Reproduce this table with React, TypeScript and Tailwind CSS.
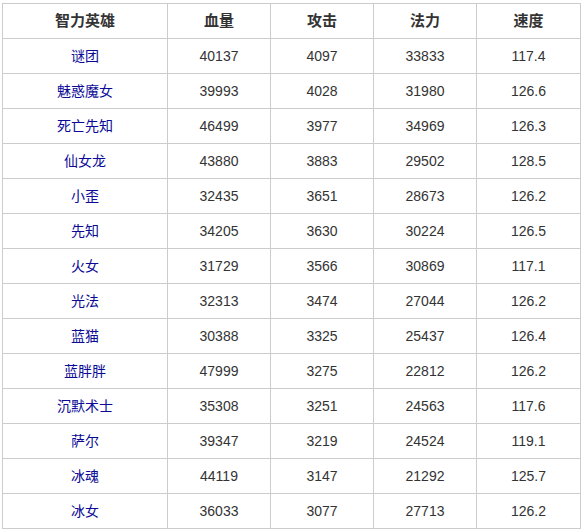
const rows: [string, number, number, number, string][] = [
  ["谜团", 40137, 4097, 33833, "117.4"],
  ["魅惑魔女", 39993, 4028, 31980, "126.6"],
  ["死亡先知", 46499, 3977, 34969, "126.3"],
  ["仙女龙", 43880, 3883, 29502, "128.5"],
  ["小歪", 32435, 3651, 28673, "126.2"],
  ["先知", 34205, 3630, 30224, "126.5"],
  ["火女", 31729, 3566, 30869, "117.1"],
  ["光法", 32313, 3474, 27044, "126.2"],
  ["蓝猫", 30388, 3325, 25437, "126.4"],
  ["蓝胖胖", 47999, 3275, 22812, "126.2"],
  ["沉默术士", 35308, 3251, 24563, "117.6"],
  ["萨尔", 39347, 3219, 24524, "119.1"],
  ["冰魂", 44119, 3147, 21292, "125.7"],
  ["冰女", 36033, 3077, 27713, "126.2"],
];

const headers = ["智力英雄", "血量", "攻击", "法力", "速度"];

const App = () => {
  return (
    <div className="min-h-screen bg-white pt-[3px] pl-[2px] font-['Liberation_Sans','Noto_Sans_CJK_SC',sans-serif]">
      <table className="w-[578px] table-fixed border-collapse text-[14px] text-[#333]">
        <colgroup>
          <col className="w-[165px]" />
          <col className="w-[103px]" />
          <col className="w-[103px]" />
          <col className="w-[103px]" />
          <col className="w-[104px]" />
        </colgroup>
        <thead>
          <tr className="h-[35px]">
            {headers.map((h) => (
              <th key={h} className="border border-[#cccccc] p-0 text-center text-[15px] font-bold text-[#333]">
                {h}
              </th>
            ))}
          </tr>
        </thead>
        <tbody>
          {rows.map(([name, hp, atk, mp, spd]) => (
            <tr key={name} className="h-[35px]">
              <td className="border border-[#cccccc] p-0 text-center">
                <a href="#" className="text-[#0a0a96]">{name}</a>
              </td>
              <td className="border border-[#cccccc] p-0 text-center">{hp}</td>
              <td className="border border-[#cccccc] p-0 text-center">{atk}</td>
              <td className="border border-[#cccccc] p-0 text-center">{mp}</td>
              <td className="border border-[#cccccc] p-0 text-center">{spd}</td>
            </tr>
          ))}
        </tbody>
      </table>
    </div>
  );
};

export default App;
